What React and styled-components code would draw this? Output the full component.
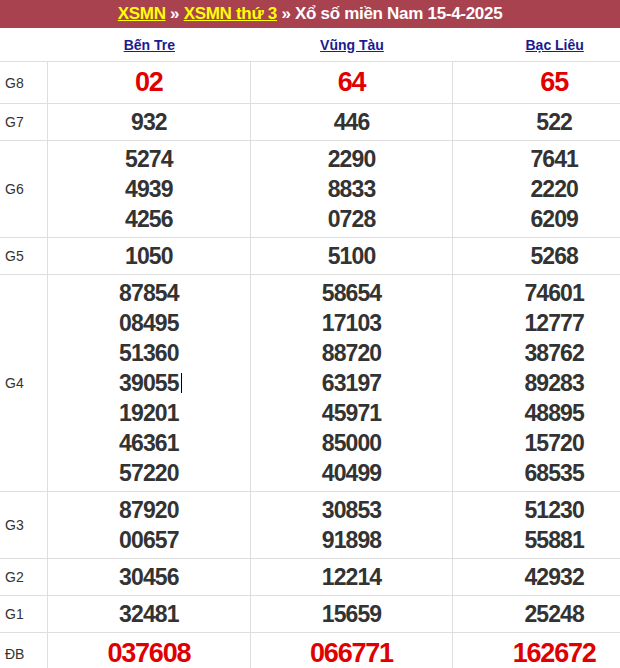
import React from 'react'
import styled, { createGlobalStyle } from 'styled-components'

const GlobalStyle = createGlobalStyle`
  body {
    margin: 0;
    background: #fff;
    overflow: hidden;
    font-family: "Liberation Sans", Arial, sans-serif;
  }
`

const Page = styled.div`
  width: 656px;
`

const TitleBar = styled.div`
  height: 28px;
  background-color: #a8424f;
  color: #fff;
  font-weight: bold;
  font-size: 17px;
  display: flex;
  align-items: center;
  justify-content: center;
  width: 620px;
  letter-spacing: -0.3px;

  a {
    color: #ffff00;
    text-decoration: underline;
  }
`

const Grid = styled.div`
  display: grid;
  grid-template-columns: 48px repeat(3, 1fr);
`

const HeadCell = styled.div`
  height: 33px;
  display: flex;
  align-items: center;
  justify-content: center;
  border-bottom: 1px solid #dedede;

  a {
    color: #1b1b8f;
    font-weight: bold;
    font-size: 14px;
    text-decoration: underline;
  }
`

const Label = styled.div`
  display: flex;
  align-items: center;
  padding-left: 5px;
  font-size: 14px;
  color: #333;
  border-right: 1px solid #dedede;
  border-bottom: 1px solid #dedede;
`

const Cell = styled.div`
  display: flex;
  flex-direction: column;
  align-items: center;
  justify-content: center;
  padding: 3px 0;
  border-right: 1px solid #dedede;
  border-bottom: 1px solid #dedede;
`

const Num = styled.span`
  font-weight: bold;
  font-size: ${p => (p.$big ? '27px' : '23px')};
  line-height: ${p => (p.$big ? '35px' : '30px')};
  color: ${p => (p.$big ? '#e00000' : '#333')};
  letter-spacing: ${p => (p.$big ? '-1.2px' : '-0.9px')};
  position: relative;
`

const Caret = styled.span`
  position: absolute;
  right: -3px;
  top: 5px;
  width: 1px;
  height: 20px;
  background: #000;
`

const provinces = ['Bến Tre', 'Vũng Tàu', 'Bạc Liêu']

const prizes = [
  { name: 'G8', big: true, cols: [['02'], ['64'], ['65']] },
  { name: 'G7', cols: [['932'], ['446'], ['522']] },
  { name: 'G6', cols: [['5274', '4939', '4256'], ['2290', '8833', '0728'], ['7641', '2220', '6209']] },
  { name: 'G5', cols: [['1050'], ['5100'], ['5268']] },
  {
    name: 'G4',
    cols: [
      ['87854', '08495', '51360', '39055', '19201', '46361', '57220'],
      ['58654', '17103', '88720', '63197', '45971', '85000', '40499'],
      ['74601', '12777', '38762', '89283', '48895', '15720', '68535'],
    ],
  },
  { name: 'G3', cols: [['87920', '00657'], ['30853', '91898'], ['51230', '55881']] },
  { name: 'G2', cols: [['30456'], ['12214'], ['42932']] },
  { name: 'G1', cols: [['32481'], ['15659'], ['25248']] },
  { name: 'ĐB', big: true, cols: [['037608'], ['066771'], ['162672']] },
]

export default function App() {
  return (
    <Page>
      <GlobalStyle />
      <TitleBar>
        <a href="#">XSMN</a>&nbsp;»&nbsp;<a href="#">XSMN thứ 3</a>&nbsp;» Xổ số miền Nam 15-4-2025
      </TitleBar>
      <Grid>
        <HeadCell />
        {provinces.map(p => (
          <HeadCell key={p}>
            <a href="#">{p}</a>
          </HeadCell>
        ))}
        {prizes.map(prize => (
          <React.Fragment key={prize.name}>
            <Label>{prize.name}</Label>
            {prize.cols.map((nums, ci) => (
              <Cell key={ci}>
                {nums.map(n => (
                  <Num key={n} $big={prize.big}>
                    {n}
                    {n === '39055' && <Caret />}
                  </Num>
                ))}
              </Cell>
            ))}
          </React.Fragment>
        ))}
      </Grid>
    </Page>
  )
}
